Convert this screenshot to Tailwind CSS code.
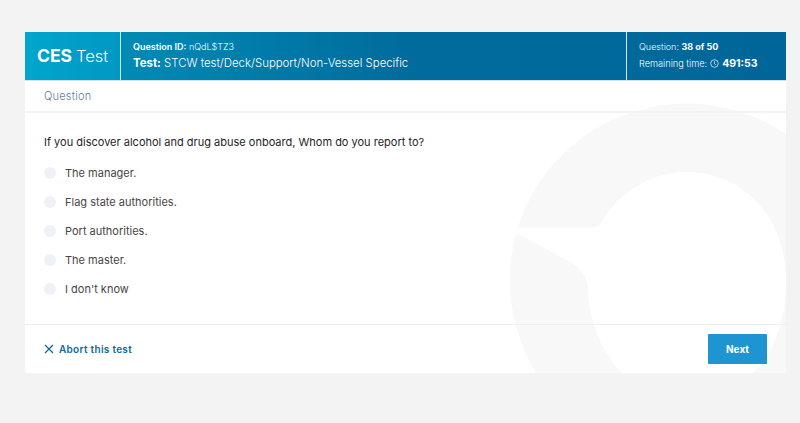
<!DOCTYPE html>
<html lang="en">
<head>
    <meta charset="UTF-8">
    <meta name="viewport" content="width=device-width, initial-scale=1.0">
    <script src="https://cdn.jsdelivr.net/npm/@tailwindcss/browser@4"></script>
    <title>CES Test</title>
</head>
<body class="h-[423px] overflow-hidden bg-[#f3f3f3] pt-[32px] pl-[25px] font-['Inter',sans-serif]">

    <div class="relative h-[341px] w-[761px] overflow-hidden bg-white">
        <!-- watermark logo -->
        <svg class="absolute left-0 top-0" width="761" height="341" viewBox="25 32 761 341" fill="#f8f8f9">
            <path d="M519 224 A177 177 0 0 1 786 134 L786 280 C786 220 745 172 687 172 C650 172 617 193 601 224 Q599 227 596 227 L521 227 Q517 227 519 224 Z"/>
            <path d="M515 238 Q516 233 521 235 L570 262 C582 269 588 279 588 292 C589 320 602 353 622 373 L536 373 A177 177 0 0 1 515 238 Z"/>
            <path d="M786 283 C786 320 774 352 753 373 L786 373 Z"/>
        </svg>

        <div class="relative flex h-[49px] border-b border-[#cfe3ec] bg-gradient-to-r from-[#0095bd] via-[#006c9d] via-50% to-[#006699] text-white">
            <div class="flex w-[96px] items-center border-r border-[#cfe6ef] bg-gradient-to-r from-[#00a6cc] to-[#0098c2] pl-[12px] leading-none">
                <span class="text-[17.5px] font-bold">CES</span><span class="ml-[4px] text-[16.5px] font-light">Test</span>
            </div>
            <div class="flex-1 pl-[12px] pt-[8px]">
                <div class="text-[9px] leading-[13px]"><span class="font-semibold">Question ID:</span> <span class="font-light">nQdL$TZ3</span></div>
                <div class="mt-[2px] text-[11.4px] leading-[17px]"><span class="font-bold">Test:</span> <span class="font-light">STCW test/Deck/Support/Non-Vessel Specific</span></div>
            </div>
            <div class="w-[160px] border-l border-[#cfe6ef] pl-[12px] pt-[8px]">
                <div class="text-[9px] leading-[13px]"><span class="font-light">Question:</span> <span class="font-bold">38 of 50</span></div>
                <div class="mt-[2px] flex items-center text-[9.2px] leading-[17px]">
                    <span class="font-light">Remaining time:</span>
                    <svg class="ml-[3px]" width="9" height="9" viewBox="0 0 9 9" fill="none" stroke="white" stroke-width="0.7">
                        <circle cx="4.5" cy="4.5" r="3.8"/>
                        <path d="M4.5 2.2V4.7L6 6"/>
                    </svg>
                    <span class="ml-[3px] text-[10.5px] font-bold">491:53</span>
                </div>
            </div>
        </div>

        <div class="relative flex h-[32px] items-center border-b-2 border-[#f2f3f7] pl-[19px] text-[11px] font-light tracking-[0.2px] text-[#5f7da3]">
            Question
        </div>

        <div class="relative h-[211px] pl-[19px] pt-[21px] text-[11px] text-[#4a4444]">
            <p class="text-[11px] leading-[16px] text-[#1f2328]">If you discover alcohol and drug abuse onboard, Whom do you report to?</p>
            <ul class="mt-[8px] flex flex-col">
                <li class="flex h-[29px] items-center gap-[9px]"><span class="size-[12px] rounded-full bg-[#eef2f7]"></span><span class="pt-[2px]">The manager.</span></li>
                <li class="flex h-[29px] items-center gap-[9px]"><span class="size-[12px] rounded-full bg-[#eef2f7]"></span><span class="pt-[2px]">Flag state authorities.</span></li>
                <li class="flex h-[29px] items-center gap-[9px]"><span class="size-[12px] rounded-full bg-[#eef2f7]"></span><span class="pt-[2px]">Port authorities.</span></li>
                <li class="flex h-[29px] items-center gap-[9px]"><span class="size-[12px] rounded-full bg-[#eef2f7]"></span><span class="pt-[2px]">The master.</span></li>
                <li class="flex h-[29px] items-center gap-[9px]"><span class="size-[12px] rounded-full bg-[#eef2f7]"></span><span class="pt-[2px]">I don't know</span></li>
            </ul>
        </div>

        <div class="relative flex h-[49px] items-center justify-between border-t border-[#eef0f6] pl-[19px] pr-[19px]">
            <a href="#" class="flex items-center gap-[5px] text-[10px] font-semibold tracking-[0.3px] text-[#0a6a9c]">
                <svg width="10" height="10" viewBox="0 0 10 10" fill="none" stroke="#0a6a9c" stroke-width="1.2">
                    <path d="M1 1L9 9M9 1L1 9"/>
                </svg>
                Abort this test
            </a>
            <button class="h-[30px] w-[59px] rounded-[1px] bg-[#1e95d1] text-[10px] font-bold text-white">Next</button>
        </div>
    </div>

</body>
</html>
